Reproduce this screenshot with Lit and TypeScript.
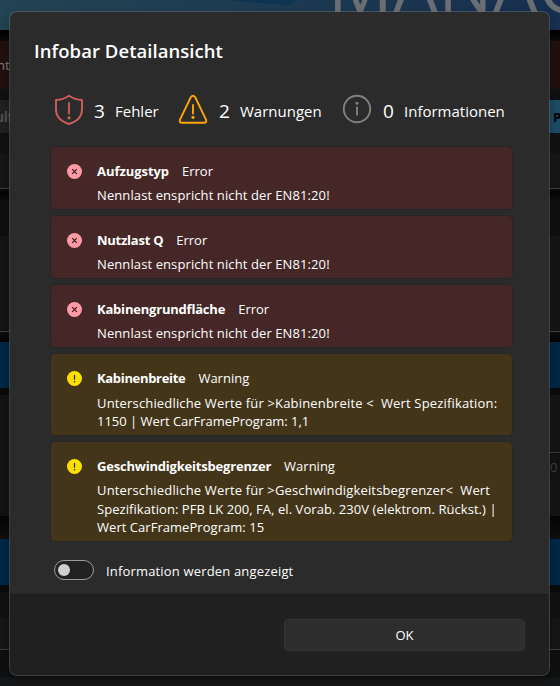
import { LitElement, html, css, svg } from "lit";
import { customElement, property } from "lit/decorators.js";

type Severity = "Error" | "Warning";

interface Message {
  title: string;
  severity: Severity;
  lines: string[];
  titleTrack: number;
  track: number[];
}

const MESSAGES: Message[] = [
  { title: "Aufzugstyp", severity: "Error", lines: ["Nennlast enspricht nicht der EN81:20!"], titleTrack: -0.05, track: [0.1] },
  { title: "Nutzlast Q", severity: "Error", lines: ["Nennlast enspricht nicht der EN81:20!"], titleTrack: -0.25, track: [0.1] },
  { title: "Kabinengrundfläche", severity: "Error", lines: ["Nennlast enspricht nicht der EN81:20!"], titleTrack: -0.2, track: [0.1] },
  {
    title: "Kabinenbreite",
    severity: "Warning",
    lines: ["Unterschiedliche Werte für >Kabinenbreite <  Wert Spezifikation:", "1150 | Wert CarFrameProgram: 1,1"],
    titleTrack: -0.32,
    track: [0.165, -0.03],
  },
  {
    title: "Geschwindigkeitsbegrenzer",
    severity: "Warning",
    lines: [
      "Unterschiedliche Werte für >Geschwindigkeitsbegrenzer<  Wert",
      "Spezifikation: PFB LK 200, FA, el. Vorab. 230V (elektrom. Rückst.) |",
      "Wert CarFrameProgram: 15",
    ],
    titleTrack: -0.2,
    track: [0.16, 0.06, 0.04],
  },
];

@customElement("info-message")
class InfoMessage extends LitElement {
  @property({ attribute: false }) message!: Message;

  static styles = css`
    :host { display: block; }
    .bar {
      display: grid;
      grid-template-columns: 16px 1fr;
      column-gap: 14px;
      box-sizing: border-box;
      padding: 16px 0 4px 15px;
      border: 1px solid transparent;
      border-radius: 4px;
      color: #fff;
      font: 13px/18px "Open Sans", sans-serif;
      white-space: pre;
    }
    .error { background: #442726; height: 62px; box-shadow: 0 0 0 1px #272525; }
    .warning { background: #433519; box-shadow: 0 0 0 1px #282726; }
    .two { height: 81px; }
    .three { height: 99px; }
    .icon { width: 16px; height: 16px; display: block; }
    .head { display: flex; gap: 13px; height: 18px; margin-top: -2px; }
    .title { font-weight: 700; }
    .text { margin-top: 6px; }
    .two .text { margin-top: 7px; }
    .three .text { line-height: 18.5px; }
  `;

  render() {
    const m = this.message;
    const err = m.severity === "Error";
    const size = m.lines.length === 3 ? "three" : m.lines.length === 2 ? "two" : "";
    return html`<div class="bar ${err ? "error" : "warning"} ${size}">
      <svg class="icon" viewBox="0 0 16 16">
        <circle cx="7.5" cy="7.5" r="7.5" fill=${err ? "#ff99a4" : "#fce100"}></circle>
        ${err
          ? svg`<path d="M5.2 5.2l4.6 4.6M9.8 5.2l-4.6 4.6" stroke="#33191b" stroke-width="1.1"></path>`
          : svg`<path d="M7.5 3.9v4.8" stroke="#2b2500" stroke-width="1.2"></path><circle cx="7.5" cy="10.7" r=".8" fill="#2b2500"></circle>`}
      </svg>
      <div><div class="head"><span class="title" style="letter-spacing:${m.titleTrack}px">${m.title}</span><span>${m.severity}</span></div><div class="text">${m.lines.map(
        (l, i) => html`<div><span style="letter-spacing:${m.track[i]}px">${l}</span></div>`
      )}</div></div>
    </div>`;
  }
}

interface Band {
  h: number;
  bg: string;
  right?: string;
  leftText?: string;
  rightText?: string;
  kind?: string;
}

const BANDS: Band[] = [
  { h: 11, bg: "linear-gradient(#000,#0b0b0b)" },
  { h: 48, bg: "#211010", leftText: "nt", kind: "alert" },
  { h: 11, bg: "#111113" },
  { h: 33, bg: "#202020", right: "#1c4c64", leftText: "ult", rightText: "P", kind: "tab" },
  { h: 20, bg: "#101113" },
  { h: 35, bg: "#151617" },
  { h: 1, bg: "#3c3d3e" },
  { h: 11, bg: "linear-gradient(#0e0e0e,#040404 40%,#0d0d0e)" },
  { h: 36, bg: "#0f0f10" },
  { h: 95, bg: "#141517" },
  { h: 1, bg: "#3c3d3e" },
  { h: 10, bg: "linear-gradient(#0e0e0e,#030303)" },
  { h: 46, bg: "#002745" },
  { h: 7, bg: "#0b0b0b" },
  { h: 57, bg: "#121315", right: "#151515" },
  { h: 1, bg: "#121315", right: "#3a3a3a" },
  { h: 27, bg: "#121315", right: "#121212", rightText: "0", kind: "value" },
  { h: 36, bg: "#121315", right: "#151515" },
  { h: 23, bg: "linear-gradient(#050505,#101011)" },
  { h: 46, bg: "#002745" },
  { h: 7, bg: "#0b0b0b" },
  { h: 26, bg: "#111113" },
  { h: 31, bg: "#161617" },
  { h: 1, bg: "#3c3d3e" },
  { h: 27, bg: "#0f1011" },
  { h: 9, bg: "#151617" },
];

@customElement("app-root")
class AppRoot extends LitElement {
  static styles = css`
    :host {
      display: block;
      position: relative;
      width: 560px;
      height: 686px;
      overflow: hidden;
      background: #111;
      font-family: "Open Sans", sans-serif;
    }
    .banner {
      height: 30px;
      overflow: hidden;
      background: linear-gradient(90deg, #224453, #1c3951 55%, #172f50);
      position: relative;
    }
    .swoosh { display: block; width: 560px; height: 30px; }
    .brand { position: absolute; left: 328px; top: -60px; font: 400 72px/90px "Open Sans", sans-serif; color: #6b6e72; white-space: nowrap; }
    .band { display: grid; grid-template-columns: 280px 280px; overflow: hidden; }
    .cell { display: flex; align-items: center; white-space: nowrap; overflow: hidden; }
    .alert { font-size: 13px; color: #858080; text-indent: -3px; }
    .tab { font-size: 14px; font-weight: 700; color: #505050; text-indent: -5px; letter-spacing: -0.5px; }
    .tab.end { color: #000; padding-left: 273px; text-indent: 0; font-size: 13px; overflow: visible; }
    .value { font-size: 13px; color: #444; }
    .value.end { padding-left: 270px; }
    .dialog {
      position: absolute;
      left: 9px;
      top: 11px;
      width: 541px;
      height: 665px;
      box-sizing: border-box;
      display: flex;
      flex-direction: column;
      border: 1px solid rgba(110, 115, 120, 0.5);
      border-radius: 8px;
      background: #2b2b2b;
      background-clip: padding-box;
      overflow: hidden;
      color: #fff;
      box-shadow: 0 4px 10px rgba(0, 0, 0, 0.3);
    }
    .content { height: 582px; box-sizing: border-box; padding: 25px 0 0 24px; }
    .heading { margin: 0; font-size: 18.5px; line-height: 28px; font-weight: 600; letter-spacing: 0.05px; white-space: nowrap; }
    .summary { display: flex; height: 32px; margin: 29px 0 0 20px; align-items: center; }
    .stat { display: flex; align-items: center; height: 32px; white-space: nowrap; }
    .stat-fehler { width: 124px; }
    .stat-warn { width: 164px; }
    .symbol { width: 30px; height: 32px; display: block; flex: none; }
    .count { width: 21px; margin-left: 10px; font-size: 19px; line-height: 28px; padding-top: 1px; }
    .stat-warn .count, .stat-info .count { margin-left: 11px; }
    .label { font-size: 15px; line-height: 20px; padding-top: 1px; }
    .list { display: grid; gap: 7px; width: 461px; margin: 21px 0 0 17px; }
    .toggle-row { display: flex; align-items: center; gap: 12px; margin: 18px 0 0 20px; height: 22px; font-size: 13px; line-height: 18px; letter-spacing: 0.17px; }
    .toggle-label { padding-top: 1px; }
    .toggle { width: 40px; height: 20px; box-sizing: border-box; border: 1px solid #9c9c9c; border-radius: 10px; background: #222; display: flex; align-items: center; padding-left: 3px; }
    .knob { width: 12px; height: 12px; border-radius: 6px; background: #cfcfcf; }
    .footer { flex: 1; border-top: 1px solid #1b1b1b; background: #202020; display: flex; justify-content: flex-end; padding: 24px 24px 0 0; }
    .ok { width: 241px; height: 32px; box-sizing: border-box; border: 1px solid #353535; border-radius: 4px; background: #2d2d2d; color: #fff; font: 13px/18px "Open Sans", sans-serif; padding: 0; }
  `;

  render() {
    return html`
      <div class="banner">
        <svg class="swoosh" viewBox="0 0 560 30">
          <path d="M228 0H285L280 4Q255 3 228 0Z" fill="#0d3453"></path>
          <path d="M278 0H296Q292 5 284 5Q279 4 278 0Z" fill="#0d3453"></path>
        </svg>
        <div class="brand">MANAG</div>
      </div>
      ${BANDS.map(
        (b) => html`<div class="band" style="height:${b.h}px;background:${b.bg}">
          <div class="cell ${b.kind ?? ""}">${b.leftText ?? ""}</div>
          <div class="cell end ${b.kind ?? ""}" style=${b.right ? `background:${b.right}` : ""}>${b.rightText ?? ""}</div>
        </div>`
      )}
      <div class="dialog">
        <div class="content">
          <h1 class="heading">Infobar Detailansicht</h1>
          <div class="summary">
            <div class="stat stat-fehler">
              <svg class="symbol" viewBox="0 0 30 32" fill="none" stroke="#cd5c5c" stroke-width="1.9" stroke-linejoin="round">
                <path d="M15 1.8Q21 5.8 28 6V15.5Q28 26 15 30Q2 26 2 15.5V6Q9 5.8 15 1.8Z"></path>
                <path d="M15 9V19.5" stroke-linecap="round"></path>
                <circle cx="15" cy="23.8" r="1.6" fill="#cd5c5c" stroke="none"></circle>
              </svg>
              <span class="count">3</span><span class="label">Fehler</span>
            </div>
            <div class="stat stat-warn">
              <svg class="symbol" viewBox="0 0 30 32" fill="none" stroke="#ffa500" stroke-width="1.9" stroke-linejoin="round">
                <path d="M12.9 3Q15 .4 17.1 3L28 25.6Q29 28.6 26 28.8H4Q1 28.6 2 25.6Z"></path>
                <path d="M15 11V19.5" stroke-linecap="round"></path>
                <circle cx="15" cy="23.3" r="1.6" fill="#ffa500" stroke="none"></circle>
              </svg>
              <span class="count">2</span><span class="label">Warnungen</span>
            </div>
            <div class="stat stat-info">
              <svg class="symbol" viewBox="0 0 30 32" fill="none" stroke="#808080" stroke-width="1.9">
                <circle cx="15" cy="15" r="13.2"></circle>
                <path d="M15 12.5V21.5"></path>
                <circle cx="15" cy="9.3" r="1.5" fill="#808080" stroke="none"></circle>
              </svg>
              <span class="count">0</span><span class="label">Informationen</span>
            </div>
          </div>
          <div class="list">${MESSAGES.map((m) => html`<info-message .message=${m}></info-message>`)}</div>
          <div class="toggle-row"><div class="toggle"><div class="knob"></div></div><span class="toggle-label">Information werden angezeigt</span></div>
        </div>
        <div class="footer"><button class="ok">OK</button></div>
      </div>
    `;
  }
}
